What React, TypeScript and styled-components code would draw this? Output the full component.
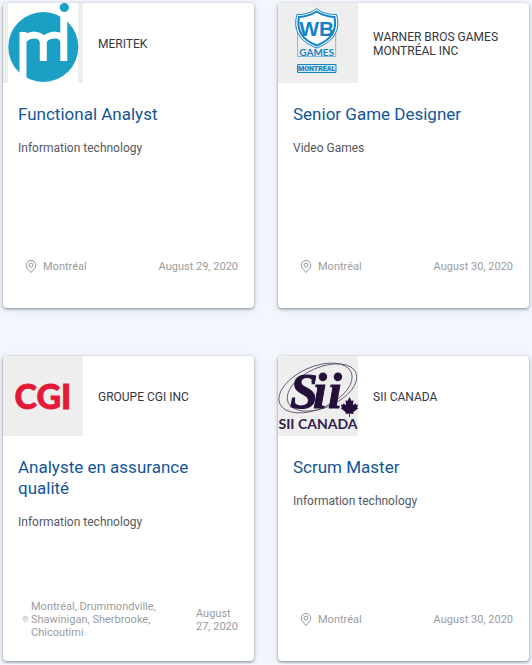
import React from "react";
import styled, { createGlobalStyle } from "styled-components";

const GlobalStyle = createGlobalStyle`
  * { box-sizing: border-box; }
  body {
    margin: 0;
    background: #f3f6fc;
    font-family: Roboto, "Liberation Sans", sans-serif;
  }
`;

const Grid = styled.main`
  display: grid;
  grid-template-columns: repeat(2, minmax(0, 1fr));
  gap: 48px 24px;
  padding: 3px;
`;

const Card = styled.article`
  display: flex;
  flex-direction: column;
  min-height: 305px;
  overflow: hidden;
  background: #fff;
  border-radius: 4px;
  box-shadow: 0 1px 3px rgba(60, 70, 75, 0.55), 0 2px 8px rgba(60, 70, 90, 0.12);
`;

const CardHeader = styled.header`
  display: flex;
  align-items: center;
  gap: 15px;
`;

const LogoBox = styled.div`
  flex: none;
  width: 80px;
  height: 80px;
  background: #eee;

  svg { display: block; }
`;

const Company = styled.p`
  margin: 0;
  padding-top: 2px;
  font-size: 12px;
  line-height: 14px;
  color: #343741;
`;

const CardBody = styled.div`
  flex: 1;
  padding: 21px 15px 16px;
`;

const Title = styled.h2`
  margin: 0 0 15px;
  font-size: 17px;
  font-weight: 400;
  line-height: 21px;
`;

const TitleLink = styled.a`
  color: #125699;
  text-decoration: none;
`;

const Category = styled.p`
  margin: 0;
  font-size: 12px;
  line-height: 16px;
  color: #55585f;
`;

const CardFooter = styled.footer`
  display: flex;
  align-items: center;
  justify-content: space-between;
  gap: 32px;
  min-height: 39px;
  margin: 0 16px 22px 19px;
  font-size: 11px;
  line-height: 13px;
  color: #9c9c9e;
`;

const Place = styled.div<{ $compact: boolean }>`
  display: flex;
  align-items: center;
  gap: ${(p) => (p.$compact ? 2 : 5)}px;
  padding-left: ${(p) => (p.$compact ? 0 : 2)}px;

  svg { flex: none; }
`;

const PostedOn = styled.time<{ $compact: boolean }>`
  width: ${(p) => (p.$compact ? "42px" : "auto")};
  flex: none;
`;

const Pin = ({ size }: { size: number }) => (
  <svg width={size} height={size} viewBox="0 0 14 14" fill="none" stroke="#96969a" aria-hidden="true">
    <path d="M7 12.500C5 9.800 2.200 8 2.200 5.100a4.800 4.600 0 0 1 9.600 0C11.800 8 9 9.800 7 12.500Z" />
    <circle cx="7" cy="5.100" r="2" />
  </svg>
);

const MeritekLogo = () => (
  <svg width="80" height="80" role="img" aria-label="Meritek">
    <path fill="#fff" d="M5 0h70v80H5z" />
    <circle cx="40.3" cy="44" r="35" fill="#1b9fc5" />
    <circle cx="61.3" cy="4.5" r="4.6" fill="#1b9fc5" />
    <path
      d="M20 29V80M21 37C24 31 40.300 29 40.300 40V58M41 37C45 31 60.800 29 60.800 40M60.800 58V13"
      fill="none"
      stroke="#fff"
      strokeWidth="7"
    />
  </svg>
);

const WarnerLogo = () => (
  <svg width="80" height="80" role="img" aria-label="WB Games Montréal">
    <path d="M19.5 27V53.5H57.7V27" fill="none" stroke="#83b9dc" />
    <path
      d="M38.7 5.500C33 10 27 11.500 19 11.500c-4 14 1 26.500 19.700 33.500C57.500 38 62.500 25.500 58.500 11.500 50 11.500 44 10 38.700 5.500Z"
      fill="#fff"
      stroke="#1583c6"
    />
    <path
      d="M38.700 8.500C33 12 28 13.700 21 14c-2.500 12 1 22 17.700 28.500C55.500 36 59 26 56.500 14 49 13.700 44 12 38.700 8.500Z"
      fill="none"
      stroke="#1583c6"
      strokeWidth="2"
    />
    <text x="38.700" y="33" textAnchor="middle" fill="#1583c6" fontFamily="Liberation Sans" fontWeight="700" fontSize="21">WB</text>
    <text x="38.700" y="52.500" textAnchor="middle" fill="#1583c6" fontFamily="Lato" fontWeight="700" fontSize="10">GAMES</text>
    <path d="M19.500 61.500h38.500v8h-38.500z" fill="#cfe6f4" stroke="#1583c6" />
    <text x="38.700" y="68" textAnchor="middle" fill="#1583c6" fontFamily="Roboto" fontWeight="900" fontSize="7">MONTRÉAL</text>
  </svg>
);

const CgiLogo = () => (
  <svg width="80" height="80" role="img" aria-label="CGI">
    <text x="40" y="53" textAnchor="middle" fill="#e41937" stroke="#e41937" strokeWidth="0.8" fontFamily="Lato" fontWeight="900" fontSize="34">CGI</text>
  </svg>
);

const SiiLogo = () => (
  <svg width="80" height="80" role="img" aria-label="SII Canada">
    <g fill="none" stroke="#5b4a6b" strokeWidth="0.8">
      <ellipse cx="37.500" cy="32" rx="39" ry="21" transform="rotate(-24 37.500 32)" />
      <ellipse cx="44" cy="31.500" rx="37" ry="20" transform="rotate(-24 44 31.500)" />
    </g>
    <text
      x="12 35 50"
      y="52"
      fill="#240f3a"
      stroke="#240f3a"
      fontFamily="Liberation Serif"
      fontWeight="700"
      fontStyle="italic"
      fontSize="50"
    >
      Sii
    </text>
    <path
      fill="#240f3a"
      d="M71.500 41l2 4 2-.800-.500 5 2.500-2 .700 1.700 2-.400-1 3 1 .800-5 4 .400 1.700-3.700-.600V61h-.800v-3.600l-3.700.600.400-1.700-5-4 1-.800-1-3 2 .400.700-1.700 2.500 2-.500-5 2 .800z"
    />
    <text x="40" y="73" textAnchor="middle" fill="#33204a" fontFamily="Lato" fontWeight="700" fontSize="14">SII CANADA</text>
  </svg>
);

interface Job {
  company: string;
  title: string;
  category: string;
  place: string;
  date: string;
  isoDate: string;
  Logo: React.FC;
  compact?: boolean;
}

const jobs: Job[] = [
  { company: "MERITEK", title: "Functional Analyst", category: "Information technology", place: "Montréal", date: "August 29, 2020", isoDate: "2020-08-29", Logo: MeritekLogo },
  { company: "WARNER BROS GAMES MONTRÉAL INC", title: "Senior Game Designer", category: "Video Games", place: "Montréal", date: "August 30, 2020", isoDate: "2020-08-30", Logo: WarnerLogo },
  { company: "GROUPE CGI INC", title: "Analyste en assurance qualité", category: "Information technology", place: "Montréal, Drummondville, Shawinigan, Sherbrooke, Chicoutimi", date: "August 27, 2020", isoDate: "2020-08-27", Logo: CgiLogo, compact: true },
  { company: "SII CANADA", title: "Scrum Master", category: "Information technology", place: "Montréal", date: "August 30, 2020", isoDate: "2020-08-30", Logo: SiiLogo },
];

export default function App() {
  return (
    <>
      <GlobalStyle />
      <Grid>
        {jobs.map(({ Logo, compact = false, ...job }) => (
          <Card key={job.company}>
            <CardHeader>
              <LogoBox><Logo /></LogoBox>
              <Company>{job.company}</Company>
            </CardHeader>
            <CardBody>
              <Title><TitleLink href="#">{job.title}</TitleLink></Title>
              <Category>{job.category}</Category>
            </CardBody>
            <CardFooter>
              <Place $compact={compact}>
                <Pin size={compact ? 7 : 14} />
                <span>{job.place}</span>
              </Place>
              <PostedOn $compact={compact} dateTime={job.isoDate}>{job.date}</PostedOn>
            </CardFooter>
          </Card>
        ))}
      </Grid>
    </>
  );
}
